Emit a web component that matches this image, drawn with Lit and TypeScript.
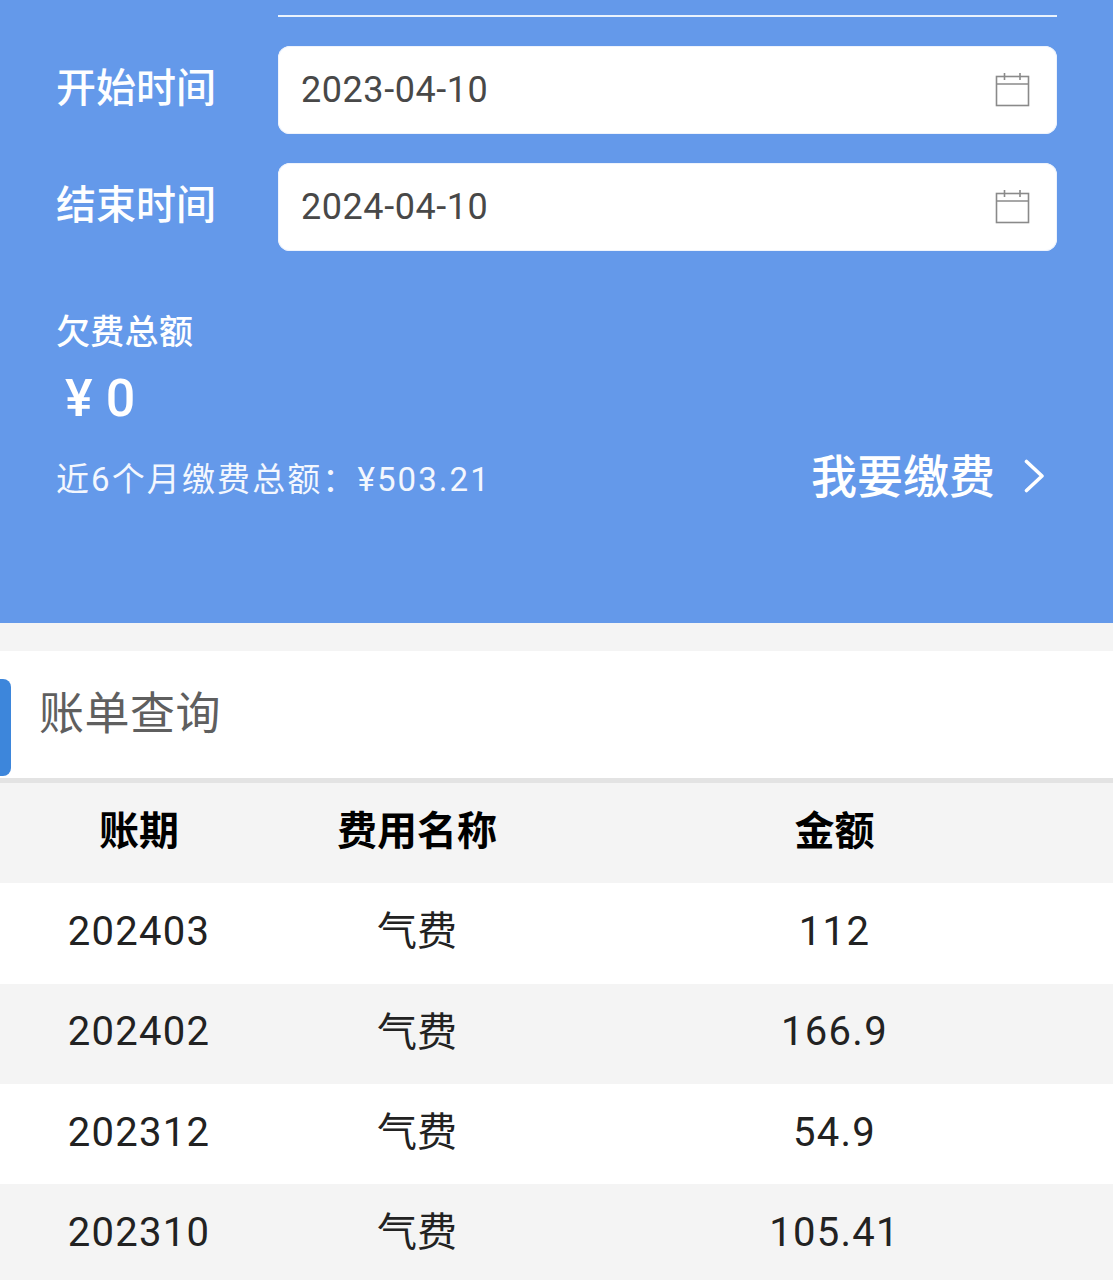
import { LitElement, html, css, svg } from "lit";
import { customElement } from "lit/decorators.js";

const calendar = svg`<svg class="cal" width="36" height="36" viewBox="0 0 36 36" fill="none" stroke="#8a8a8a" stroke-width="1.6">
  <rect x="1.5" y="5.5" width="32" height="29" />
  <path d="M1.5 13h32M9.5 2v7M25 2v7" />
</svg>`;

const rows = [
  ["202403", "气费", "112"],
  ["202402", "气费", "166.9"],
  ["202312", "气费", "54.9"],
  ["202310", "气费", "105.41"],
];

@customElement("app-root")
export class AppRoot extends LitElement {
  static styles = css`
    :host {
      display: block;
      width: 1113px;
      height: 1280px;
      overflow: hidden;
      background: #f4f4f4;
      font-family: Roboto, "Noto Sans CJK SC", sans-serif;
    }
    .hero {
      height: 623px;
      box-sizing: border-box;
      background: #6499ea;
      padding: 15px 56px 0 56px;
      color: #fff;
      display: flex;
      flex-direction: column;
    }
    .rule {
      height: 2px;
      background: #eaf3fd;
      margin-left: 222px;
      margin-bottom: 29px;
    }
    .field {
      display: flex;
      align-items: center;
      height: 88px;
      margin-bottom: 29px;
    }
    .field-label {
      width: 222px;
      flex: none;
      font-size: 40px;
      line-height: 85px;
      height: 88px;
      color: #fdfeff;
      font-weight: 500;
    }
    .input {
      flex: 1;
      height: 88px;
      box-sizing: border-box;
      background: #fff;
      border-radius: 12px;
      box-shadow: inset 0 0 0 1px #eef3fc;
      display: flex;
      align-items: center;
      justify-content: space-between;
      padding: 0 26px 0 23px;
      font-size: 36px;
      letter-spacing: 0.55px;
      color: #484848;
    }
    .cal {
      display: block;
      margin-top: -3px;
    }
    .owed-label {
      font-size: 34px;
      line-height: 48px;
      margin-top: 28px;
      font-weight: 500;
      letter-spacing: 0.3px;
    }
    .owed {
      font-size: 52px;
      line-height: 64px;
      margin-top: 11px;
      padding-left: 9px;
      display: flex;
      gap: 13px;
      font-weight: 500;
    }
    .foot {
      display: flex;
      justify-content: space-between;
      align-items: center;
      margin-top: 15px;
      height: 60px;
    }
    .sum {
      font-size: 33px;
      letter-spacing: 2.1px;
      margin-top: 2px;
      color: #f3f7fe;
    }
    .pay {
      display: flex;
      align-items: center;
      gap: 29px;
      font-size: 46px;
      margin-right: 13px;
      font-weight: 500;
    }
    .pay span {
      padding-bottom: 6px;
    }
    .pay svg {
      display: block;
    }
    .gap {
      height: 28px;
    }
    .title {
      height: 127px;
      background: #fff;
      display: flex;
      align-items: center;
      position: relative;
      padding-left: 39px;
      font-size: 45px;
      letter-spacing: 0.5px;
      color: #5f5f5f;
      border-bottom: 5px solid #e3e3e3;
    }
    .title span {
      padding-bottom: 8px;
    }
    .mark {
      position: absolute;
      left: 0;
      top: 28px;
      width: 11px;
      height: 97px;
      background: #3d86db;
      border-radius: 0 8px 8px 0;
    }
    .row {
      display: grid;
      grid-template-columns: 278px 278px 557px;
      height: 100.3px;
      align-items: center;
      text-align: center;
      font-size: 40px;
      letter-spacing: 1.3px;
      color: #222;
      background: #fff;
    }
    .row span {
      padding-bottom: 4px;
    }
    .row:nth-child(odd) {
      background: #f4f4f4;
    }
    .row.head {
      font-weight: 700;
      color: #000;
      letter-spacing: 0;
    }
    .row.head span,
    .row .cn {
      padding-bottom: 10px;
    }
    .row .cn {
      letter-spacing: 0;
    }
  `;

  render() {
    return html`
      <section class="hero">
        <div class="rule"></div>
        <div class="field">
          <div class="field-label">开始时间</div>
          <div class="input"><span>2023-04-10</span>${calendar}</div>
        </div>
        <div class="field">
          <div class="field-label">结束时间</div>
          <div class="input"><span>2024-04-10</span>${calendar}</div>
        </div>
        <div class="owed-label">欠费总额</div>
        <div class="owed"><span>¥</span><span>0</span></div>
        <div class="foot">
          <div class="sum">近6个月缴费总额：¥503.21</div>
          <div class="pay">
            <span>我要缴费</span>
            <svg width="20" height="34" viewBox="0 0 20 34" fill="none" stroke="#fff" stroke-width="3.6" stroke-linecap="round" stroke-linejoin="round">
              <path d="M2.5 2.5 18 17 2.5 31.5" />
            </svg>
          </div>
        </div>
      </section>
      <div class="gap"></div>
      <div class="title"><i class="mark"></i><span>账单查询</span></div>
      <div class="table">
        <div class="row head"><span>账期</span><span>费用名称</span><span>金额</span></div>
        ${rows.map(
          (r) => html`<div class="row"><span>${r[0]}</span><span class="cn">${r[1]}</span><span>${r[2]}</span></div>`
        )}
      </div>
    `;
  }
}
